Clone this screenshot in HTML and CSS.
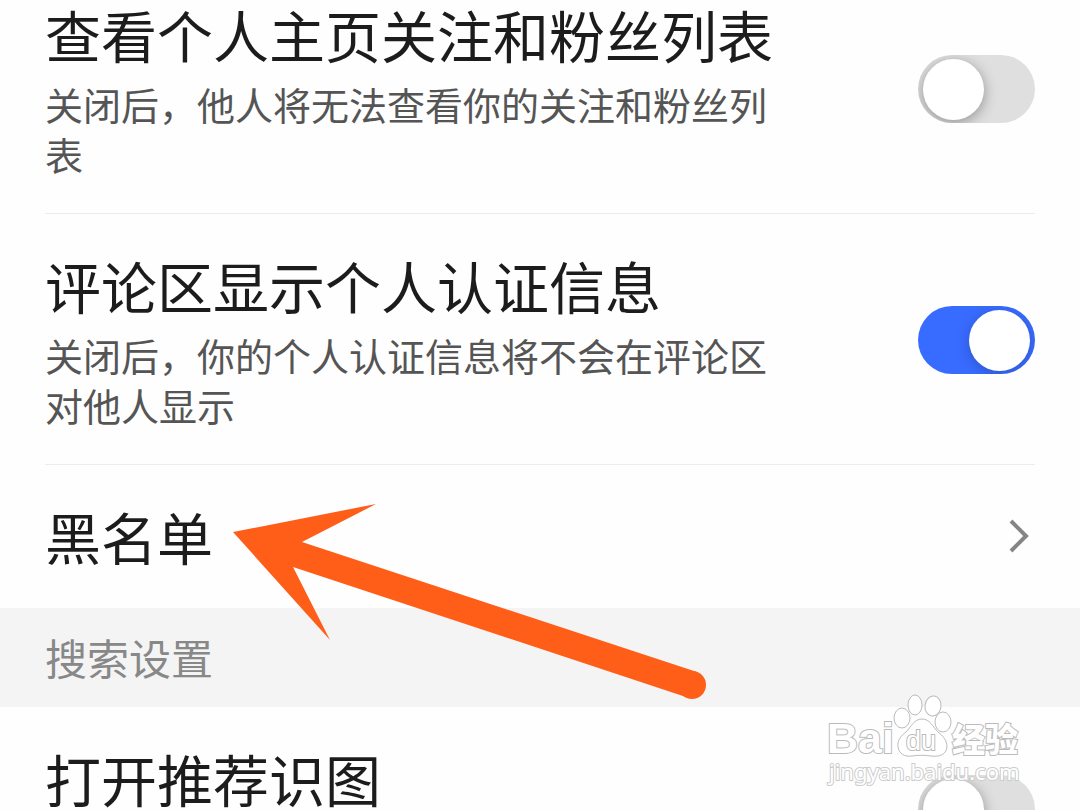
FILE: index.html
```html
<!DOCTYPE html>
<html lang="zh-CN">
<head>
<meta charset="UTF-8">
<meta name="viewport" content="width=device-width, initial-scale=1.0">
<title>隐私设置</title>
<link rel="stylesheet" href="styles.css">
</head>
<body>
<main class="page">
  <div class="settings">
    <div class="row">
      <div class="text">
        <label class="title" for="followList">查看个人主页关注和粉丝列表</label>
        <p class="desc">关闭后，他人将无法查看你的关注和粉丝列表</p>
      </div>
      <input type="checkbox" class="switch" id="followList">
    </div>
    <div class="row">
      <div class="text">
        <label class="title" for="certInfo">评论区显示个人认证信息</label>
        <p class="desc">关闭后，你的个人认证信息将不会在评论区对他人显示</p>
      </div>
      <input type="checkbox" class="switch" id="certInfo" checked>
    </div>
    <a class="row link" href="#blacklist">
      <span class="title">黑名单</span>
      <svg class="chevron" width="20" height="36" viewBox="0 0 20 36">
        <path d="M2 3 L17 18 L2 33" fill="none" stroke="#858585" stroke-width="4"/>
      </svg>
    </a>
    <h2 class="section">搜索设置</h2>
    <div class="row last">
      <div class="text">
        <label class="title" for="imageSearch">打开推荐识图</label>
      </div>
      <input type="checkbox" class="switch" id="imageSearch">
    </div>
  </div>

  <!-- arrow pointing at the blacklist row -->
  <svg class="arrow" width="480" height="200" viewBox="0 0 480 200">
    <path d="M3 32 L146 4 L72 42 L467 172 A14 14 0 0 1 459 198 L63 67 L100 140 Z" fill="#ff5e19"/>
    <circle cx="462" cy="185" r="14" fill="#ff5e19"/>
  </svg>

  <svg class="watermark" width="210" height="100" viewBox="0 0 210 100">
    <g class="outline">
      <text class="bai" x="7" y="63">Bai</text>
      <ellipse cx="82" cy="28" rx="8" ry="10"/>
      <ellipse cx="95" cy="15" rx="7" ry="10"/>
      <ellipse cx="113" cy="16" rx="8" ry="10" transform="rotate(8 113 16)"/>
      <ellipse cx="123" cy="32" rx="8" ry="10"/>
      <path d="M102 29 C94 29 91 37 86 42 C81 46 77 50 78 57 C79 64 85 67 92 66 C98 65 105 65 111 66 C119 67 126 65 127 57 C127 50 123 46 118 42 C113 37 110 29 102 29 Z"/>
      <text class="du" x="86" y="60">du</text>
      <text class="jingyan" x="132" y="62">经验</text>
      <text class="url" x="9" y="90">jingyan.baidu.com</text>
    </g>
  </svg>
</main>
</body>
</html>
```
FILE: styles.css
```css
body {
  margin: 0;
  background-color: #fefefe;
  color: #1c1c1c;
  font-family: "Noto Sans CJK SC", sans-serif;
}

.page {
  position: relative;
  height: 100vh;
  overflow: hidden;
}

/* the list is scrolled a little past its first row */
.settings {
  margin-top: -37px;
}

.row {
  display: flex;
  align-items: center;
  justify-content: space-between;
  box-sizing: border-box;
  margin: 0 45px;
  padding: 36px 0 34px;
  border-bottom: 1px solid #ececec;
}

.text {
  width: 74%;
}

.title {
  display: block;
  font-size: 56px;
  line-height: 70px;
}

.desc {
  margin: 10px 0 0;
  color: #555;
  font-size: 38px;
  line-height: 50px;
}

.link {
  padding: 36px 6px 37px 0;
  border-bottom: none;
  color: inherit;
  text-decoration: none;
}

.last {
  align-items: flex-start;
  min-height: 204px;
  border-bottom: none;
}

.last .switch {
  margin-top: 32px;
}

.section {
  margin: 0;
  padding: 19px 45px 20px;
  background-color: #f4f4f4;
  color: #888;
  font-size: 42px;
  font-weight: normal;
  line-height: 60px;
}

.switch {
  appearance: none;
  flex-shrink: 0;
  width: 117px;
  height: 68px;
  margin: 0;
  padding: 4px 5px 3px;
  box-sizing: border-box;
  border-radius: 34px;
  background-color: #dfdfdf;
  overflow: hidden;
  cursor: pointer;
}

.switch::before {
  content: "";
  display: block;
  width: 61px;
  height: 61px;
  border-radius: 50%;
  background-color: #fff;
  box-shadow: 0 3px 14px rgba(0, 0, 0, 0.35);
}

.switch:checked {
  background-color: #386bff;
}

.switch:checked::before {
  margin-left: auto;
  box-shadow: 0 3px 14px rgba(0, 0, 0, 0.2);
}

.arrow {
  position: absolute;
  top: 500px;
  left: 230px;
  pointer-events: none;
}

.watermark {
  position: absolute;
  right: 50px;
  bottom: 20px;
  pointer-events: none;
}

.outline {
  fill: #fff;
  stroke: #bbb;
  stroke-width: 1px;
}

.outline text {
  stroke-width: 2px;
  paint-order: stroke;
}

.bai {
  font: bold 43px "Liberation Sans", sans-serif;
}

.du {
  font: 27px "Liberation Sans", sans-serif;
}

.jingyan {
  font: 900 33px "Noto Sans CJK SC", sans-serif;
}

.url {
  font: 22px "Noto Sans", sans-serif;
  stroke: #ccc;
}
```
